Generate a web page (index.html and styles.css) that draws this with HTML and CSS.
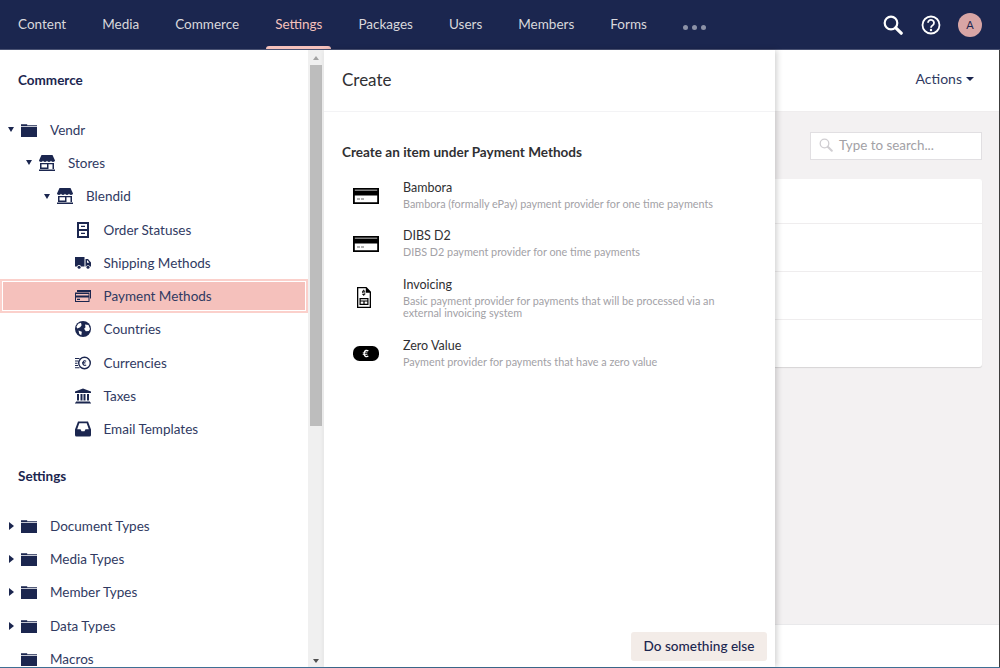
FILE: index.html
```html
<!DOCTYPE html>
<html>
<head>
<meta charset="utf-8">
<title>Settings - Payment Methods</title>
<link rel="stylesheet" href="styles.css">
</head>
<body>
<svg class="defs" width="0" height="0">
    <symbol id="i-folder" viewBox="0 0 16 14"><path d="M0 1.200h6.200v1H16V3H0zM0 3.800h16V14H0z"/></symbol>
    <symbol id="i-store" viewBox="0 0 16 16"><path d="M2.500 0h11L16 5.600c0 .9-.9 1.400-2 1.400s-2-.5-2-1.400c0 .9-.9 1.400-2 1.400s-2-.5-2-1.400C8 6.500 7.100 7 6 7S4 6.500 4 5.600C4 6.500 3.100 7 2 7S0 6.500 0 5.600z"/><path d="M1 8h14v6h-1.500V9.200h-4V14H1zM2.500 9.200v3.300h5.500V9.200zM0 14.500h16V16H0z" fill-rule="evenodd"/></symbol>
    <symbol id="i-cabinet" viewBox="0 0 12 16"><path fill-rule="evenodd" d="M0 0h12v16H0zM2 2v5h8V2zM2 9v5h8V9zM4 3.700h4v1.400H4zM4 10.700h4v1.400H4z"/></symbol>
    <symbol id="i-truck" viewBox="0 0 16 12"><path fill-rule="evenodd" d="M0 0h9.500v9.500H6a2 2 0 0 0-3.800 0H0zM10.500 2H13l3 3.500v4h-1.200a2 2 0 0 0-3.600 0h-.7zM12 3.500v2.200h2.200L12.800 3.500z"/><circle cx="4.100" cy="10.200" r="1.500"/><circle cx="13" cy="10.200" r="1.500"/></symbol>
    <symbol id="i-cards" viewBox="0 0 16 12"><path fill-rule="evenodd" d="M2 0h14v8.500h-1V2H2zM0 2.500h14.500V12H0zM1 4v1.500h12.500V4zM1 7.500V11h12.500V7.500zM2 8.800h3V10H2z"/></symbol>
    <symbol id="i-globe" viewBox="0 0 16 16"><circle cx="8" cy="8" r="8"/><path fill="#fff" d="M3.200 2.800L6 1.800l.6 2.400-1.400 2-2.900 1.200-.9-1.600zM10 3.600l3.500.4 1.500 4-1.200 2-3 .2-1.700-2.400 1.400-1.600zM3.500 9.600l3.300 1.200-.5 3.400-2-1.200z"/></symbol>
    <symbol id="i-coins" viewBox="0 0 16 13"><path fill-rule="evenodd" d="M9.500 0a6.500 6.500 0 1 0 0 13 6.500 6.500 0 0 0 0-13zm0 1.400a5.100 5.100 0 1 1 0 10.200 5.100 5.100 0 0 1 0-10.200z"/><path d="M11.500 4.500a2.300 2.300 0 0 0-4 1.200H7v.8h.4v.4H7v.8h.6a2.300 2.300 0 0 0 3.900 1.100l-.7-.7a1.300 1.300 0 0 1-2.100-.4h1.700v-.8H8.500v-.4h1.900v-.8H8.700a1.300 1.300 0 0 1 2.100-.5zM0 1.500h4.500v1.100H0zM0 4h3v1.100H0zM0 6.200h2.500v1.100H0zM0 8.400h3v1.100H0zM0 10.700h4.500v1.100H0z"/></symbol>
    <symbol id="i-bank" viewBox="0 0 16 15"><path d="M8 0l8 3v1.500H0V3zM1 13h14v1H1zM0 14h16v1H0zM2 5.500h2V12H2zM5.500 5.500h2V12h-2zM8.500 5.500h2V12h-2zM12 5.500h2V12h-2z"/></symbol>
    <symbol id="i-inbox" viewBox="0 0 16 15"><path fill-rule="evenodd" d="M3 0h10l3 8v5.500a1.500 1.500 0 0 1-1.500 1.500h-13A1.500 1.500 0 0 1 0 13.500V8zM4.300 1.800L2.200 7.800h3.300l1 2h3l1-2h3.300l-2.100-6z"/></symbol>
    <symbol id="i-card" viewBox="0 0 26 16"><path fill-rule="evenodd" d="M0 0h26v16H0zM1.800 7.500V14.200h22.400V7.500zM1.800 1.800v.6h22.400v-.6z"/><path d="M4 10.500h3v1H4zM8 10.500h3v1H8z" opacity=".6"/></symbol>
    <symbol id="i-invoice" viewBox="0 0 14 21"><path fill-rule="evenodd" d="M0 0h9.500L14 4.800V21H0zM1.300 1.300v18.400h11.400V5.700H8.800V1.300z"/><path d="M6.200 2.800h1v.9h1v1H5.900v.8h2.300v2.300h-1v.9h-1v-.9h-1v-1h2.300v-.8H5.200V3.700h1zM2.500 11h9v7h-9zM3.700 12.200v1.200h6.600v-1.200zM3.700 14.500v2.300h2.700v-2.300zM7.600 14.500v2.300h2.700v-2.300z" fill-rule="evenodd"/></symbol>
    <symbol id="i-euro" viewBox="0 0 26 15"><rect width="26" height="15" rx="6.500"/><path fill="#fff" d="M15.800 4.500a3.100 3.100 0 0 0-5.200 1.900h-.9v.9h.8v.6h-.8v.9h.9a3.100 3.100 0 0 0 5.100 1.700l-.8-.9a1.800 1.800 0 0 1-2.900-.8h2.400v-.9h-2.600v-.6h2.600v-.9h-2.400a1.800 1.800 0 0 1 2.900-.8z"/></symbol>
</svg>

<div class="app">
    <header class="topbar">
        <nav class="sections">
            <a class="section">Content</a>
            <a class="section">Media</a>
            <a class="section">Commerce</a>
            <a class="section active">Settings</a>
            <a class="section">Packages</a>
            <a class="section">Users</a>
            <a class="section">Members</a>
            <a class="section">Forms</a>
            <span class="more"><i></i><i></i><i></i></span>
        </nav>
        <div class="tools">
            <svg class="tool-search" width="20" height="20" viewBox="0 0 20 20"><circle cx="8" cy="8" r="6.300" fill="none" stroke="#fff" stroke-width="2.200"/><path d="M12.800 12.800l5.400 5.400" stroke="#fff" stroke-width="3.200" stroke-linecap="round"/></svg>
            <svg class="tool-help" width="20" height="20" viewBox="0 0 20 20"><circle cx="10" cy="10" r="8.500" fill="none" stroke="#fff" stroke-width="1.800"/><path d="M7 7.800a3 3 0 1 1 4.700 2.500c-1.100.7-1.700 1.200-1.700 2.500" fill="none" stroke="#fff" stroke-width="1.800"/><circle cx="10" cy="15" r="1.200" fill="#fff"/></svg>
            <span class="avatar">A</span>
        </div>
    </header>

    <div class="workspace">
        <aside class="sidebar">
            <div class="tree">
                <h3 class="tree-title">Commerce</h3>
                <ul class="tree-list">
                    <li class="node"><span class="caret open"></span><svg class="icon"><use href="#i-folder"/></svg>Vendr</li>
                    <li class="node lvl-1"><span class="caret open"></span><svg class="icon"><use href="#i-store"/></svg>Stores</li>
                    <li class="node lvl-2"><span class="caret open"></span><svg class="icon"><use href="#i-store"/></svg>Blendid</li>
                    <li class="node lvl-3"><svg class="icon"><use href="#i-cabinet"/></svg>Order Statuses</li>
                    <li class="node lvl-3"><svg class="icon"><use href="#i-truck"/></svg>Shipping Methods</li>
                    <li class="node lvl-3 selected"><svg class="icon"><use href="#i-cards"/></svg>Payment Methods</li>
                    <li class="node lvl-3"><svg class="icon"><use href="#i-globe"/></svg>Countries</li>
                    <li class="node lvl-3"><svg class="icon"><use href="#i-coins"/></svg>Currencies</li>
                    <li class="node lvl-3"><svg class="icon"><use href="#i-bank"/></svg>Taxes</li>
                    <li class="node lvl-3"><svg class="icon"><use href="#i-inbox"/></svg>Email Templates</li>
                </ul>
                <h3 class="tree-title second">Settings</h3>
                <ul class="tree-list">
                    <li class="node"><span class="caret"></span><svg class="icon"><use href="#i-folder"/></svg>Document Types</li>
                    <li class="node"><span class="caret"></span><svg class="icon"><use href="#i-folder"/></svg>Media Types</li>
                    <li class="node"><span class="caret"></span><svg class="icon"><use href="#i-folder"/></svg>Member Types</li>
                    <li class="node"><span class="caret"></span><svg class="icon"><use href="#i-folder"/></svg>Data Types</li>
                    <li class="node"><span class="caret none"></span><svg class="icon"><use href="#i-folder"/></svg>Macros</li>
                </ul>
            </div>
            <div class="scrollbar">
                <span class="arrow up"></span>
                <span class="thumb"></span>
                <span class="arrow down"></span>
            </div>
        </aside>

        <section class="create">
            <h2 class="create-head">Create</h2>
            <div class="create-body">
                <h4 class="create-sub">Create an item under Payment Methods</h4>
                <ul class="items">
                    <li class="item">
                        <svg class="item-icon card"><use href="#i-card"/></svg>
                        <div><div class="item-name">Bambora</div><div class="item-desc">Bambora (formally ePay) payment provider for one time payments</div></div>
                    </li>
                    <li class="item">
                        <svg class="item-icon card"><use href="#i-card"/></svg>
                        <div><div class="item-name">DIBS D2</div><div class="item-desc">DIBS D2 payment provider for one time payments</div></div>
                    </li>
                    <li class="item">
                        <svg class="item-icon invoice"><use href="#i-invoice"/></svg>
                        <div><div class="item-name">Invoicing</div><div class="item-desc">Basic payment provider for payments that will be processed via an external invoicing system</div></div>
                    </li>
                    <li class="item">
                        <svg class="item-icon euro"><use href="#i-euro"/></svg>
                        <div><div class="item-name">Zero Value</div><div class="item-desc">Payment provider for payments that have a zero value</div></div>
                    </li>
                </ul>
            </div>
            <div class="create-foot"><button class="btn-else">Do something else</button></div>
        </section>

        <main class="content">
            <div class="content-head"><span class="actions">Actions<span class="actions-caret"></span></span></div>
            <div class="content-body">
                <div class="search-row">
                    <div class="search-box">
                        <svg width="14" height="14" viewBox="0 0 14 14"><circle cx="5.500" cy="5.500" r="4.300" fill="none" stroke="#d0ced2" stroke-width="1.300"/><path d="M8.800 8.800l4 4" stroke="#d0ced2" stroke-width="2" stroke-linecap="round"/></svg>
                        <span>Type to search...</span>
                    </div>
                </div>
                <div class="list-card">
                    <div class="list-row"></div>
                    <div class="list-row"></div>
                    <div class="list-row"></div>
                    <div class="list-row"></div>
                </div>
            </div>
            <div class="content-foot"></div>
        </main>
    </div>
</div>
</body>
</html>
```

FILE: styles.css
```css
* {
    box-sizing: border-box;
}
html, body {
    margin: 0;
    height: 100%;
    overflow: hidden;
}
body {
    font-family: Lato, "Liberation Sans", sans-serif;
    color: #1b264f;
    background: #fff;
}
ul {
    list-style: none;
    margin: 0;
    padding: 0;
}
h2, h3, h4 {
    margin: 0;
}
.defs {
    display: block;
    height: 0;
}
.app {
    display: flex;
    flex-direction: column;
    width: 1000px;
    height: 668px;
    border-bottom: 1px solid #3f6f94;
}

/* top bar */
.topbar {
    display: flex;
    flex: none;
    justify-content: space-between;
    height: 50px;
    padding: 0 18px 0 0;
    background: #1b264f;
    border-bottom: 1px solid #4a5273;
}
.sections {
    display: flex;
    align-items: stretch;
}
.section {
    position: relative;
    display: flex;
    align-items: center;
    padding: 0 18px 2px;
    font-size: 13.500px;
    color: #d9d8dc;
}
.section.active {
    color: #f5c1bc;
}
.section.active::after {
    content: "";
    position: absolute;
    left: 9px;
    right: 9px;
    bottom: 0;
    height: 3px;
    border-radius: 3px 3px 0 0;
    background: #f5c1bc;
}
.more {
    display: flex;
    align-items: center;
    gap: 4px;
    padding: 5px 0 0 18px;
}
.more i {
    width: 5px;
    height: 5px;
    border-radius: 50%;
    background: #8d92a7;
}
.tools {
    display: flex;
    align-items: center;
}
.tool-search {
    margin-right: 18px;
}
.tool-help {
    margin-right: 17px;
}
.avatar {
    display: flex;
    align-items: center;
    justify-content: center;
    width: 24px;
    height: 24px;
    border-radius: 50%;
    font-size: 11px;
    background: #d8a5a5;
    color: #1b264f;
}

.workspace {
    display: flex;
    flex: 1;
    min-height: 0;
}

/* tree */
.sidebar {
    display: flex;
    flex: none;
    width: 324px;
    border-right: 1px solid #f2f2f2;
}
.tree {
    flex: 1;
    overflow: hidden;
    padding-top: 20px;
}
.tree-title {
    height: 43px;
    padding-left: 18px;
    font-size: 13.500px;
    font-weight: 700;
    line-height: 20px;
}
.tree-title.second {
    margin-top: 20px;
}
.node {
    display: flex;
    align-items: center;
    height: 33.300px;
    padding-left: 8px;
    font-size: 13.500px;
    color: #303a62;
}
.lvl-1 {
    padding-left: 26px;
}
.lvl-2 {
    padding-left: 44px;
}
.lvl-3 {
    padding-left: 74.500px;
}
.node .icon {
    flex: none;
    width: 16px;
    height: 16px;
    margin-right: 13px;
    fill: #1b264f;
}
.caret {
    flex: none;
    width: 0;
    height: 0;
    margin: 0 7px 0 1px;
    border-style: solid;
    border-width: 4px 0 4px 5px;
    border-color: transparent transparent transparent #1b264f;
}
.caret.open {
    margin: 0 7px 0 0;
    border-width: 5px 3.500px 0 3.500px;
    border-color: #1b264f transparent transparent transparent;
}
.caret.none {
    border-color: transparent;
}
.selected {
    border: 2px solid #fbd0cb;
    box-shadow: inset 0 0 0 1px #fff;
    background: #f5c1bc;
    padding-left: 72.500px;
}

/* fake scrollbar, the reference has a windows one */
.scrollbar {
    display: flex;
    flex: none;
    flex-direction: column;
    align-items: center;
    width: 15px;
    background: #f0f0f0;
}
.arrow {
    flex: none;
    width: 0;
    height: 0;
    margin: 6px 0 5px;
    border-style: solid;
    border-width: 0 3.500px 4px;
    border-color: transparent transparent #a3a3a3;
}
.arrow.down {
    margin: auto 0 4px;
    border-width: 4px 3.500px 0;
    border-color: #505050 transparent transparent;
}
.thumb {
    flex: none;
    width: 12px;
    height: 361px;
    background: #bdbdbd;
}

/* create dialog */
.create {
    position: relative;
    z-index: 2;
    display: flex;
    flex: none;
    flex-direction: column;
    width: 451px;
    background: #fff;
    box-shadow: 2px 0 6px rgba(0, 0, 0, .18);
}
.create-head {
    height: 62px;
    padding: 18px 18px 0;
    font-size: 17px;
    font-weight: 400;
    line-height: 24px;
    color: #303033;
    border-bottom: 1px solid #f3f3f5;
}
.create-body {
    flex: 1;
    padding: 31px 18px 0;
}
.create-sub {
    height: 34.500px;
    font-size: 13.550px;
    font-weight: 700;
    line-height: 19px;
    color: #303033;
}
.items {
    padding-left: 11px;
}
.item {
    display: flex;
    gap: 24px;
    padding-bottom: 16px;
}
.item-name {
    margin-bottom: 1px;
    font-size: 12.500px;
    line-height: 19px;
    color: #303033;
}
.item-desc {
    width: 330px;
    font-size: 10.800px;
    line-height: 12.500px;
    color: #a2a1a6;
}
.item-icon {
    flex: none;
    width: 26px;
    height: 24px;
    fill: #000;
}
.item-icon.card {
    height: 16px;
    margin-top: 10px;
}
.item-icon.invoice {
    width: 14px;
    height: 21px;
    margin: 12px 8px 0 4px;
}
.item-icon.euro {
    height: 15px;
    margin-top: 10px;
}
.create-foot {
    display: flex;
    justify-content: flex-end;
    padding: 0 8px 6px;
}
.btn-else {
    height: 29px;
    width: 136px;
    padding: 0 0 2px;
    border: 0;
    border-radius: 3px;
    background: #f3ece8;
    font-family: inherit;
    font-size: 13.600px;
    font-weight: 500;
    color: #1b264f;
}

/* page behind the dialog */
.content {
    display: flex;
    flex: 1;
    flex-direction: column;
    min-width: 0;
    border-right: 1px solid #3c3c3c;
}
.content-head {
    display: flex;
    flex: none;
    align-items: center;
    justify-content: flex-end;
    height: 62px;
    padding: 0 25px 4px 0;
    border-bottom: 1px solid #efedee;
}
.actions {
    display: flex;
    align-items: center;
    font-size: 14px;
    color: #303a62;
}
.actions-caret {
    width: 0;
    height: 0;
    margin-left: 4px;
    border-style: solid;
    border-width: 4px 4px 0;
    border-color: #1b264f transparent transparent;
}
.content-body {
    flex: 1;
    padding: 20px 17px 0 0;
    background: #f3f1f2;
}
.search-row {
    display: flex;
    justify-content: flex-end;
    margin-bottom: 19px;
}
.search-box {
    display: flex;
    align-items: center;
    gap: 6px;
    width: 172px;
    height: 28px;
    padding: 0 0 2px 8px;
    background: #fff;
    border: 1px solid #e1dfe2;
    font-size: 13.400px;
    color: #a2a1a6;
}
.list-card {
    height: 188px;
    border-radius: 0 3px 3px 0;
    background: #fff;
    box-shadow: 0 1px 1px rgba(0, 0, 0, .12);
}
.list-row {
    height: 48px;
    border-bottom: 1px solid #efedee;
}
.list-row:first-child {
    height: 45px;
}
.list-row:last-child {
    border-bottom: 0;
}
.content-foot {
    flex: none;
    height: 43px;
    background: #fff;
    border-top: 1px solid #e9e9eb;
}
```
